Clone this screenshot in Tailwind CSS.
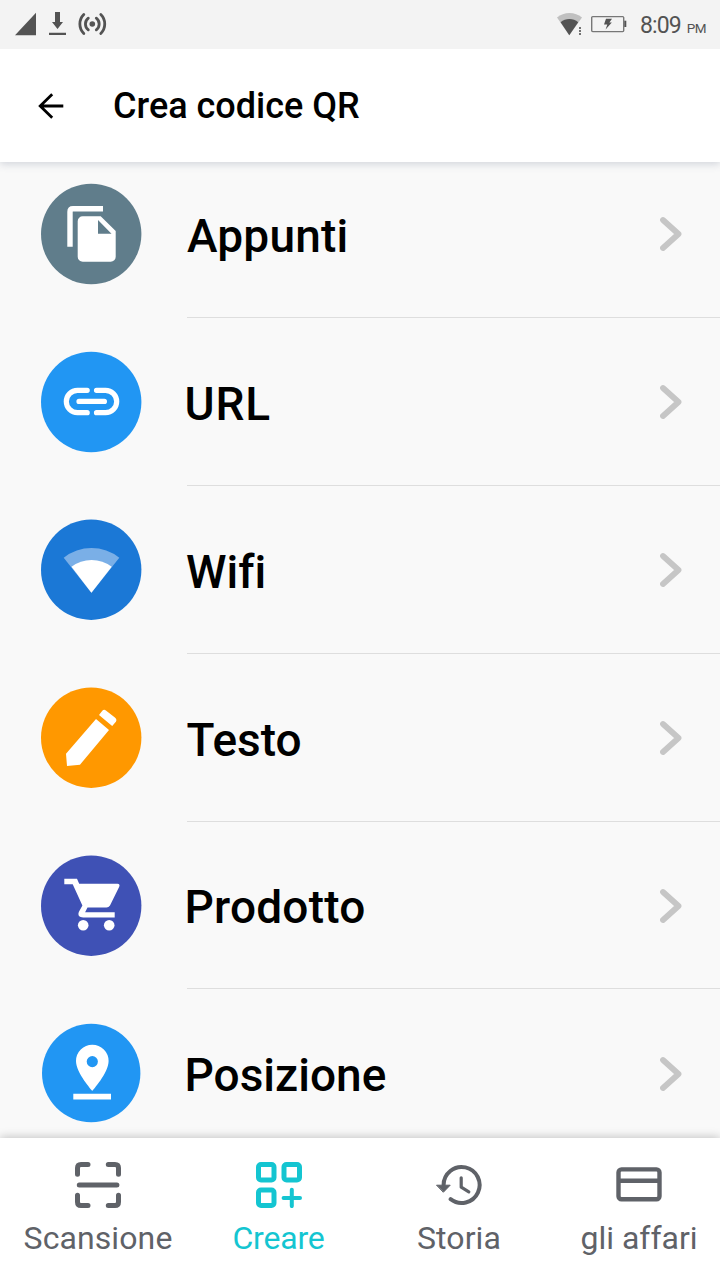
<!DOCTYPE html>
<html lang="it">
<head>
    <meta charset="UTF-8">
    <meta name="viewport" content="width=device-width, initial-scale=1.0">
    <title>Crea codice QR</title>
    <script src="https://cdn.jsdelivr.net/npm/@tailwindcss/browser@4"></script>
    <style>
        body {
            font-family: Roboto, 'Liberation Sans', sans-serif;
            font-variant-ligatures: none;
        }
    </style>
</head>
<body class="bg-[#f9f9f9] text-black w-[720px] h-[1280px] overflow-hidden flex flex-col">
    <!-- Status bar -->
    <div class="h-[49px] shrink-0 bg-[#f3f3f3] text-[#535353] flex items-start justify-between relative z-20">
        <svg class="w-[120px] h-[49px]" viewBox="0 0 120 49" fill="currentColor">
            <path d="M15 35.3H36V12.8z"/>
            <path d="M55 12h5v10h3l-5.5 7-5.5-7h3zM49 32.8h17v2.3H49z"/>
            <circle cx="92.3" cy="24" r="2.8"/>
            <g fill="none" stroke="currentColor" stroke-width="2.8" stroke-linecap="round">
                <path d="M88.3 18.2a7.3 7.3 0 0 0 0 11.6M96.3 18.2a7.3 7.3 0 0 1 0 11.6"/>
                <path d="M83.8 14.6a13.2 13.2 0 0 0 0 18.8M100.8 14.6a13.2 13.2 0 0 1 0 18.8"/>
            </g>
        </svg>
        <div class="flex w-[170px]">
            <svg class="w-[80px] h-[49px] shrink-0" viewBox="550 0 80 49" fill="currentColor">
                <path d="M557 17.5a19.5 19.5 0 0 1 25 0L569.3 35.3z" fill="#c0c0c0"/>
                <path d="M560.6 22.2a13.5 13.5 0 0 1 17.6 0L569.3 35.3z"/>
                <path d="M577.5 26h5v10h-5z" fill="#f3f3f3"/>
                <path d="M579.2 27h1.6v2h-1.6zM579.2 30h1.6v2h-1.6zM579.2 33h1.6v2h-1.6z"/>
                <rect x="591.7" y="16.6" width="32" height="15" rx="1" fill="none" stroke="#777" stroke-width="1.4"/>
                <path d="M624.3 20.7h2V27h-2z"/>
                <path d="M606 18.8h6l-2.6 3.8h2.4l-6.2 7 1.7-5.2H604z"/>
            </svg>
            <div class="flex items-baseline pl-[10px] pt-px">
                <span class="text-[23px] leading-[49px] tracking-[-0.9px]">8:09</span>
                <span class="text-[13.5px] ml-[6px] tracking-[-0.4px]">PM</span>
            </div>
        </div>
    </div>

    <!-- App bar -->
    <header class="h-[113px] shrink-0 bg-white flex items-center relative z-10 shadow-[0_2px_8px_rgba(80,90,120,0.24)]">
        <svg class="w-[26px] h-[26px] ml-[38px]" viewBox="0 0 26 26" fill="none" stroke="#000" stroke-width="2.8">
            <path d="M25.3 13H2M14.2 1.2L2.2 13l12 11.8"/>
        </svg>
        <h1 class="text-[36px] leading-[42px] font-medium ml-[49px]">Crea codice QR</h1>
    </header>

    <!-- QR types -->
    <main class="-mt-3 grow h-0 overflow-hidden">
        <div class="h-[168px] flex items-center pl-[41px]">
            <svg class="w-[100px] h-[100px] overflow-visible shrink-0" viewBox="0 0 100 100">
                <circle cx="50.2" cy="50" r="50.2" fill="#607d8b"/>
                <path d="M29 62.7V27.8q0-3 3-3h30" fill="none" stroke="#fff" stroke-width="5.4"/>
                <path fill="#fff" fill-rule="evenodd" d="M41.7 32.3h18L74.7 47v25.7a5 5 0 0 1-5 5h-28a5 5 0 0 1-5-5V37.3a5 5 0 0 1 5-5zM57 36v13.7h13.5z"/>
            </svg>
            <div class="ml-[46px] grow h-full border-b border-[#dedede] flex items-center">
                <span class="text-[46px] leading-[54px] font-medium pt-[4px] tracking-[0.2px] grow">Appunti</span>
                <svg class="w-[24px] h-[36px] mr-[37px]" viewBox="0 0 24 36" fill="none" stroke="#c6c6c6" stroke-width="5.8" stroke-linecap="round" stroke-linejoin="round"><path d="M4 4L19.5 18 4 32"/></svg>
            </div>
        </div>
        <div class="h-[168px] flex items-center pl-[41px]">
            <svg class="w-[100px] h-[100px] overflow-visible shrink-0" viewBox="0 0 100 100">
                <circle cx="50.2" cy="50" r="50.2" fill="#2196f3"/>
                <g fill="none" stroke="#fff" stroke-width="5.2" stroke-linecap="round">
                    <path d="M46.2 38.3H36.5a11.2 11.2 0 0 0 0 22.4h9.7M55.5 38.3h9a11.2 11.2 0 0 1 0 22.4h-9M38 49.4h25.4"/>
                </g>
            </svg>
            <div class="ml-[46px] grow h-full border-b border-[#dedede] flex items-center">
                <span class="text-[46px] leading-[54px] font-medium pt-[4px] -ml-[2.5px] tracking-[0.8px] grow">URL</span>
                <svg class="w-[24px] h-[36px] mr-[37px]" viewBox="0 0 24 36" fill="none" stroke="#c6c6c6" stroke-width="5.8" stroke-linecap="round" stroke-linejoin="round"><path d="M4 4L19.5 18 4 32"/></svg>
            </div>
        </div>
        <div class="h-[168px] flex items-center pl-[41px]">
            <svg class="w-[100px] h-[100px] overflow-visible shrink-0" viewBox="0 0 100 100">
                <circle cx="50.2" cy="49.7" r="50.2" fill="#1b78d6"/>
                <path d="M22.7 37.7a45 45 0 0 1 55.6 0L50.4 72.7z" fill="#7aafe7"/>
                <path d="M30.5 46.7a33.2 33.2 0 0 1 40.2 0L50.4 72.7z" fill="#fff"/>
            </svg>
            <div class="ml-[46px] grow h-full border-b border-[#dedede] flex items-center">
                <span class="text-[46px] leading-[54px] font-medium pt-[4px] -ml-px grow">Wifi</span>
                <svg class="w-[24px] h-[36px] mr-[37px]" viewBox="0 0 24 36" fill="none" stroke="#c6c6c6" stroke-width="5.8" stroke-linecap="round" stroke-linejoin="round"><path d="M4 4L19.5 18 4 32"/></svg>
            </div>
        </div>
        <div class="h-[168px] flex items-center pl-[41px]">
            <svg class="w-[100px] h-[100px] overflow-visible shrink-0" viewBox="0 0 100 100">
                <circle cx="50.2" cy="49.7" r="50.2" fill="#ff9800"/>
                <path fill="#fff" d="M55 31l13 11-29 34.7L26 78l-1-12.3zM58 27l3.3-4.2q1.6-1.8 3.6-.4l9 7q2.4 2 1 4.4L71.2 38z"/>
            </svg>
            <div class="ml-[46px] grow h-full border-b border-[#dedede] flex items-center">
                <span class="text-[46px] leading-[54px] font-medium pt-[4px] -ml-[0.5px] grow">Testo</span>
                <svg class="w-[24px] h-[36px] mr-[37px]" viewBox="0 0 24 36" fill="none" stroke="#c6c6c6" stroke-width="5.8" stroke-linecap="round" stroke-linejoin="round"><path d="M4 4L19.5 18 4 32"/></svg>
            </div>
        </div>
        <div class="h-[167px] flex items-center pl-[41px]">
            <svg class="w-[100px] h-[100px] overflow-visible shrink-0" viewBox="0 0 100 100">
                <circle cx="50.2" cy="49.7" r="50.2" fill="#3f51b5"/>
                <path fill="#fff" d="M23.3 22.7H36l2.2 5h38.3q3 .4 1.6 3.2L69 49.4q-1.3 2-3.5 2H46.5l-2.4 4.8h29.6v5.4H42.2q-6.4-.6-4.4-5.6l3.6-6.6L31.7 28.3h-8.4z"/>
                <circle cx="42.2" cy="69.3" r="5.3" fill="#fff"/>
                <circle cx="68.2" cy="69.3" r="5.3" fill="#fff"/>
            </svg>
            <div class="ml-[46px] grow h-full border-b border-[#dedede] flex items-center">
                <span class="text-[46px] leading-[54px] font-medium pt-[4px] -ml-[2.5px] tracking-[0.2px] grow">Prodotto</span>
                <svg class="w-[24px] h-[36px] mt-px mr-[37px]" viewBox="0 0 24 36" fill="none" stroke="#c6c6c6" stroke-width="5.8" stroke-linecap="round" stroke-linejoin="round"><path d="M4 4L19.5 18 4 32"/></svg>
            </div>
        </div>
        <div class="h-[169px] flex items-center pl-[41px]">
            <svg class="w-[100px] h-[100px] overflow-visible shrink-0" viewBox="0 0 100 100">
                <circle cx="50.2" cy="49" r="49.2" fill="#2196f3"/>
                <path fill="#fff" fill-rule="evenodd" d="M51.3 20.8A16.3 16.3 0 0 0 35 37.1C35 49 51.3 67 51.3 67S67.6 49 67.6 37.1A16.3 16.3 0 0 0 51.3 20.8zm0 11.2a5.6 5.6 0 1 1 0 11.2 5.6 5.6 0 0 1 0-11.2zM32.3 69.8H70v5.6H32.3z"/>
            </svg>
            <div class="ml-[46px] grow h-full flex items-center">
                <span class="text-[46px] leading-[54px] font-medium pt-[2px] -ml-[2.5px] grow">Posizione</span>
                <svg class="w-[24px] h-[36px] mr-[37px]" viewBox="0 0 24 36" fill="none" stroke="#c6c6c6" stroke-width="5.8" stroke-linecap="round" stroke-linejoin="round"><path d="M4 4L19.5 18 4 32"/></svg>
            </div>
        </div>
    </main>

    <!-- Bottom navigation -->
    <nav class="h-[142px] shrink-0 bg-white text-[#5f6268] flex pl-2 relative z-10 shadow-[0_-1px_9px_rgba(0,0,0,0.22)]">
        <div class="w-[180px] shrink-0 flex flex-col items-center pt-6">
            <svg class="w-[46px] h-[46px]" viewBox="0 0 46 46" fill="none" stroke="currentColor" stroke-width="5" stroke-linecap="round">
                <path d="M2.5 12.3V6q0-3.5 3.5-3.5h7M33.3 2.5H40q3.5 0 3.5 3.5v6.3M43.5 33.3V40q0 3.5-3.5 3.5h-6.7M13 43.5H6Q2.5 43.5 2.5 40v-6.7M4.3 23h37.6"/>
            </svg>
            <span class="text-[32px] leading-[38px] mt-[11px] tracking-[0.1px]">Scansione</span>
        </div>
        <div class="w-[181px] shrink-0 flex flex-col items-center pt-6 text-[#14c5d1]">
            <svg class="w-[46px] h-[46px]" viewBox="0 0 46 46" fill="none" stroke="currentColor" stroke-width="5">
                <rect x="2.5" y="2.5" width="15.5" height="15.5" rx="2.5"/>
                <rect x="28" y="2.5" width="15.5" height="15.5" rx="2.5"/>
                <rect x="2.5" y="28" width="15.5" height="15.5" rx="2.5"/>
                <path d="M35.8 27.7v16.4M27.6 35.9H44" stroke-width="4" stroke-linecap="round"/>
            </svg>
            <span class="text-[32px] leading-[38px] mt-[11px] tracking-[-0.2px]">Creare</span>
        </div>
        <div class="w-[180px] shrink-0 flex flex-col items-center pt-6">
            <svg class="w-[46px] h-[46px]" viewBox="0 0 46 46" fill="none" stroke="currentColor" stroke-linecap="round">
                <path d="M7.6 23A18 18 0 1 1 14.6 37.2" stroke-width="4"/>
                <path d="M25.2 15.8v9.4l7.6 4.6" stroke-width="3.2" stroke-linejoin="round"/>
                <path d="M.9 23.2H14.2L7.6 30z" fill="currentColor" stroke-width="1" stroke-linejoin="round"/>
            </svg>
            <span class="text-[32px] leading-[38px] mt-[11px] tracking-[0.1px]">Storia</span>
        </div>
        <div class="w-[180px] shrink-0 flex flex-col items-center pt-6">
            <svg class="w-[46px] h-[46px]" viewBox="0 0 46 46" fill="none" stroke="currentColor" stroke-width="4.4">
                <rect x="2.5" y="7.4" width="41" height="29.8" rx="3"/>
                <path d="M2.5 18.8h41"/>
            </svg>
            <span class="text-[32px] leading-[38px] mt-[11px]">gli affari</span>
        </div>
    </nav>
</body>
</html>
